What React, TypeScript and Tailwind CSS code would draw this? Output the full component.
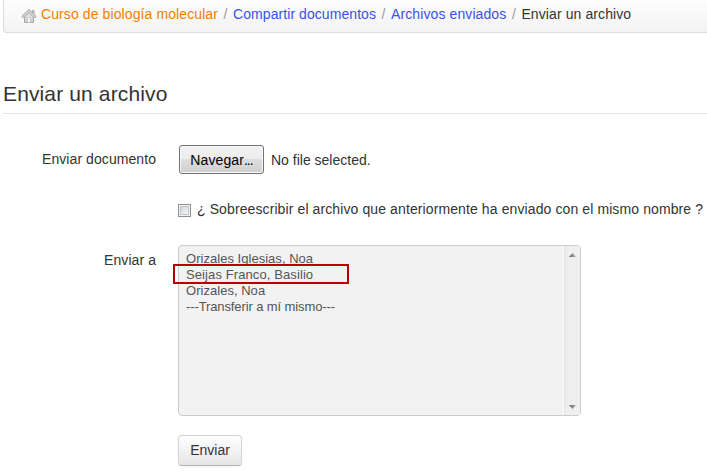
import React from "react";

const recipients = [
  { name: "Orizales Iglesias, Noa", marked: false, tracking: "tracking-[0.03px]" },
  { name: "Seijas Franco, Basilio", marked: true, tracking: "tracking-[0.1px]" },
  { name: "Orizales, Noa", marked: false, tracking: "tracking-[0.03px]" },
  { name: "---Transferir a mí mismo---", marked: false, tracking: "tracking-[-0.11px]" },
];

function HomeIcon() {
  return (
    <svg width="16" height="16" viewBox="0 0 16 16" className="shrink-0">
      <defs>
        <linearGradient id="home-fill" x1="0" y1="0" x2="0" y2="1">
          <stop offset="0" stopColor="#f4f4f4" />
          <stop offset="1" stopColor="#c8c8c8" />
        </linearGradient>
      </defs>
      <path d="M11.500 2.500h1.500v4h-1.500z" fill="#ccc" stroke="#aaa" />
      <path d="M3.500 8.200V14.500h9V8.200L8 3.800z" fill="url(#home-fill)" stroke="#aaa" />
      <path d="M8 1.200L.8 8.300l.8 1.200h1.700L8 4.800l4.700 4.700h1.700l.8-1.200z" fill="#cfcfcf" stroke="#a6a6a6" strokeWidth=".8" />
      <path d="M6.500 9.500h3v5h-3z" fill="#f8f8f8" stroke="#bbb" strokeWidth=".6" />
    </svg>
  );
}

function Separator() {
  return <span className="mx-[5.500px] text-[#999]">/</span>;
}

function Arrow({ down = false }: { down?: boolean }) {
  return (
    <svg width="7" height="4" viewBox="0 0 7 4">
      <defs>
        <linearGradient id="arrow-fill" x1="0" y1="0" x2="1" y2="0">
          <stop offset="0" stopColor="#606060" />
          <stop offset="1" stopColor="#b5b5b5" />
        </linearGradient>
      </defs>
      <path d={down ? "M0 0h7L3.500 4z" : "M0 4h7L3.500 0z"} fill="url(#arrow-fill)" />
    </svg>
  );
}

export default function App() {
  return (
    <main className="h-[471px] w-[707px] overflow-hidden bg-white pl-[3px] font-['Liberation_Sans',Arial,sans-serif] text-[14px] leading-5 text-[#333]">
      <nav className="flex h-[33px] w-[710px] items-start rounded-b border-b border-l border-[#ddd] bg-linear-to-b from-[#fdfdfd] to-[#f3f3f3] pl-[17px] pt-1 tracking-[0.1px] whitespace-nowrap">
        <span className="mt-1 flex"><HomeIcon /></span>
        <a className="ml-1 text-[#f08000]">Curso de biología molecular</a>
        <Separator />
        <a className="tracking-[0.07px] text-[#3b50f0]">Compartir documentos</a>
        <Separator />
        <a className="text-[#3b50f0]">Archivos enviados</a>
        <Separator />
        <span>Enviar un archivo</span>
      </nav>

      <h1 className="mt-[41px] h-10 border-b border-[#e2e2e2] pt-[5px] text-[21px] leading-[30px] tracking-[0.13px]">Enviar un archivo</h1>

      <form className="mt-[31px] grid grid-cols-[153px_1fr] gap-x-[22px] whitespace-nowrap">
        <label className="pt-[4px] text-right tracking-[0.07px]">Enviar documento</label>
        <div className="flex h-[58px] items-start pl-px">
          <button type="button" className="h-[29px] w-[85px] rounded-[3px] border border-[#707070] bg-[linear-gradient(#f3f3f3_0,#ebebeb_49%,#dddddd_50%,#cfcfcf_100%)] pt-px text-black shadow-[inset_0_0_0_1px_#fafafa]">
            <span className="tracking-[0.1px]">Navegar</span><span className="tracking-[-1px]">...</span>
          </button>
          <span className="ml-[7px] pt-[5px]">No file selected.</span>
        </div>

        <div className="col-start-2 flex h-[42px] items-start">
          <span className="mt-px flex size-[13px] items-center justify-center border border-[#8e8f8f] bg-[#f4f4f4]">
            <span className="size-[9px] border border-[#bfc5ca] bg-linear-to-br from-[#d2d6da] to-[#f7f7f7]" />
          </span>
          <span className="-mt-1 ml-[6px] tracking-[0.105px]">¿ Sobreescribir el archivo que anteriormente ha enviado con el mismo nombre ?</span>
        </div>

        <label className="pt-[5px] text-right tracking-[0.07px]">Enviar a</label>
        <div className="flex h-[171px] w-[403px] justify-between rounded-[4px] border border-[#ccc] bg-[#f2f2f2]">
          <ul className="pl-[7px] pt-[5px] text-[13px] leading-4 text-[#555]">
            {recipients.map((item) => (
              <li key={item.name} className="relative h-4">
                <span className={item.tracking}>{item.name}</span>
                {item.marked && <span className="absolute -left-[13px] -top-[3px] h-5 w-[176px] border-2 border-[#b90000]" />}
              </li>
            ))}
          </ul>
          <div className="flex w-[17px] flex-col items-center justify-between rounded-r-[3px] border-l border-[#fafafa] bg-linear-to-r from-[#e5e5e5] via-[#eee] via-20% to-[#f0f0f0] pb-[6px] pt-[7px]">
            <Arrow />
            <Arrow down />
          </div>
        </div>

        <button type="button" className="col-start-2 mt-[19px] h-[31px] w-16 rounded-[4px] border border-[#d4d4d4] border-b-[#b3b3b3] bg-linear-to-b from-white to-[#e6e6e6] pb-[2px] shadow-[0_1px_2px_rgba(0,0,0,0.05)]">Enviar</button>
      </form>
    </main>
  );
}
